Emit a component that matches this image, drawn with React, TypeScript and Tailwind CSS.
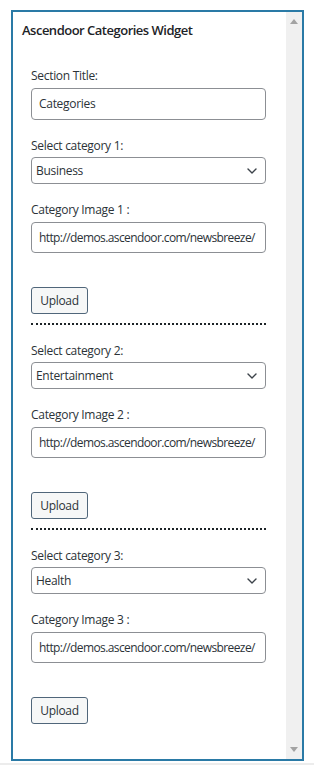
const FONT = "font-['Open_Sans','Noto_Sans',sans-serif]";
const URL_TEXT = "http://demos.ascendoor.com/newsbreeze/";

const categories = [
  { n: 1, value: "Business" },
  { n: 2, value: "Entertainment" },
  { n: 3, value: "Health" },
];

function Chevron() {
  return (
    <svg width="10" height="6" viewBox="0 0 10 6" className="shrink-0">
      <path d="M1 1 L5 5 L9 1" fill="none" stroke="#3c434a" strokeWidth="1.4" strokeLinecap="round" strokeLinejoin="round" />
    </svg>
  );
}

function CategoryBlock({ n, value, last }: { n: number; value: string; last: boolean }) {
  return (
    <div className="mt-[18px]">
      <div className="h-4 text-[12px] leading-4 tracking-[-0.3px] text-[#2c3338]">Select category {n}:</div>
      <div className="mt-[3px] flex h-[27px] items-center justify-between rounded-[4px] border border-[#8c8f94] bg-white pl-[4px] pr-[8px] text-[12px] tracking-[-0.3px] text-[#2c3338]">
        <span>{value}</span>
        <Chevron />
      </div>
      <div className="mt-[18px] h-4 text-[12px] leading-4 tracking-[-0.3px] text-[#2c3338]">Category Image {n} :</div>
      <div className="mt-[4px] flex h-[31px] items-center overflow-hidden whitespace-nowrap rounded-[4px] border border-[#8c8f94] bg-white pl-[7px] text-[12px] tracking-[-0.6px] text-[#2c3338]">
        {URL_TEXT}
      </div>
      <button className="mt-[34px] flex h-[27px] w-[57px] items-center justify-center rounded-[3px] border border-[#50667a] bg-[#f6f7f7] text-[12px] tracking-[-0.3px] text-[#2c3338]">
        Upload
      </button>
      {!last && <div className="mt-[9px] h-0 border-t-2 border-dotted border-[#1d2327]" />}
    </div>
  );
}

export default function App() {
  return (
    <div className={`relative h-[765px] w-[314px] overflow-hidden bg-white ${FONT}`}>
      <div className="ml-[11px] mt-[10px] flex h-[751px] w-[293px] border-2 border-[#2a7aa6] bg-white">
        <div className="min-w-0 flex-1 pl-[9px] pt-[9px]">
          <div className="h-[18px] text-[13px] font-semibold leading-[18px] tracking-[-0.5px] text-[#1d2327]">Ascendoor Categories Widget</div>
          <div className="ml-[9px] mr-[20px] mt-[29px]">
            <div className="h-4 text-[12px] leading-4 tracking-[-0.3px] text-[#2c3338]">Section Title:</div>
            <div className="mt-[4px] flex h-[32px] items-center rounded-[4px] border border-[#8c8f94] bg-white pl-[7px] text-[12px] tracking-[-0.3px] text-[#2c3338]">
              Categories
            </div>
            {categories.map((c, i) => (
              <CategoryBlock key={c.n} n={c.n} value={c.value} last={i === categories.length - 1} />
            ))}
          </div>
        </div>
        <div className="flex w-[16px] shrink-0 flex-col items-center justify-between bg-[#f0f0f0] py-[7px]">
          <svg width="8" height="5" viewBox="0 0 8 5">
            <path d="M0 5 L4 0 L8 5 Z" fill="#a3a3a3" />
          </svg>
          <svg width="8" height="5" viewBox="0 0 8 5">
            <path d="M0 0 L8 0 L4 5 Z" fill="#a3a3a3" />
          </svg>
        </div>
      </div>
      <div className="mt-[2px] h-[2px] w-full bg-[#ececec]" />
    </div>
  );
}
